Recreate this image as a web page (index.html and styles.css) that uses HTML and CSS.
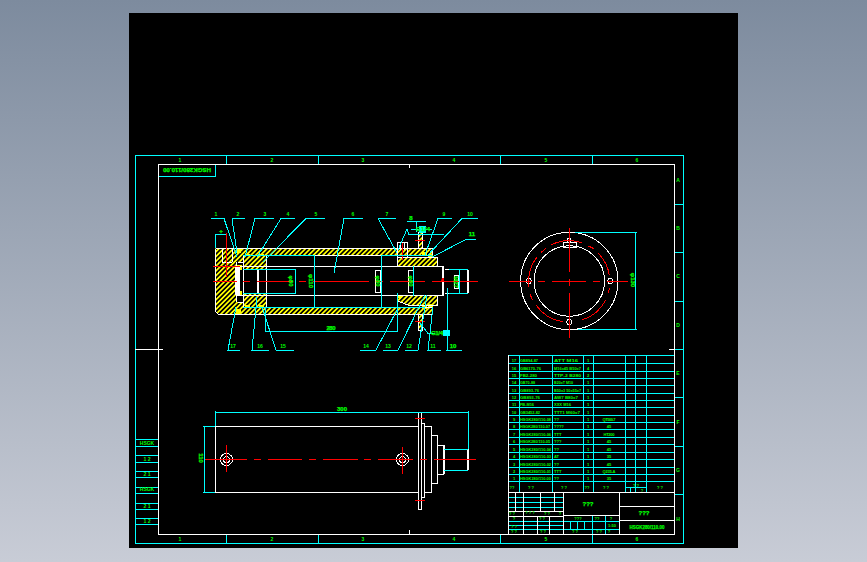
FILE: index.html
```html
<!DOCTYPE html>
<html lang="en">
<head>
  <meta charset="UTF-8">
  <title>HSGK280/110.00</title>
  <link rel="stylesheet" href="styles.css">
</head>
<body>
<main class="viewport">
<svg class="drawing" viewBox="129 13 609 535" width="609" height="535">
  <defs>
    <pattern id="hatch" width="3.4" height="3.4" patternUnits="userSpaceOnUse" patternTransform="rotate(45)">
      <rect width="1.7" height="3.4" fill="#ff0"/>
    </pattern>
  </defs>

  <!-- sheet frame -->
  <g class="cy">
    <rect x="135.5" y="155.5" width="548" height="388"/>
    <rect x="158.5" y="164.5" width="57" height="12"/>
    <path d="M226.5 155V164M318.5 155V164M500.5 155V164M592.5 155V164M674 204.5H683M674 252.5H683M674 301.5H683M674 349.5H683M674 397.5H683M674 446.5H683M674 494.5H683M226.5 534V543M318.5 534V543M500.5 534V543M592.5 534V543"/>
    <path d="M135 439.5H158M135 446.5H158M135 455.5H158M135 462.5H158M135 471.5H158M135 477.5H158M135 487.5H158M135 493.5H158M135 503.5H158M135 509.5H158M135 518.5H158M135 524.5H158"/>
  </g>
  <g class="wh">
    <rect x="158.5" y="164.5" width="516" height="370"/>
    <path d="M135 349.5H163M669 349.5H674M409.5 164V168M409.5 530V534"/>
  </g>
  <g class="t m">
    <text x="180" y="162">1</text><text x="272" y="162">2</text><text x="363" y="162">3</text><text x="454" y="162">4</text><text x="546" y="162">5</text><text x="637" y="162">6</text>
    <text x="180" y="541">1</text><text x="272" y="541">2</text><text x="363" y="541">3</text><text x="454" y="541">4</text><text x="546" y="541">5</text><text x="637" y="541">6</text>
    <text x="678" y="182">A</text><text x="678" y="230">B</text><text x="678" y="278">C</text><text x="678" y="327">D</text><text x="678" y="375">E</text><text x="678" y="424">F</text><text x="678" y="472">G</text><text x="678" y="521">H</text>
    <text x="147" y="445">HSGK</text><text x="147" y="461">1 2</text><text x="147" y="476">2 1</text><text x="147" y="491">HSGK</text><text x="147" y="508">2 1</text><text x="147" y="523">1 2</text>
    <text class="big" transform="rotate(180 187 170.5)" x="187" y="173" textLength="48" lengthAdjust="spacingAndGlyphs">HSGK280/110.00</text>
  </g>

  <!-- section view: hatched parts -->
  <g class="hatch">
    <path d="M215 248H432V255H243V262H236V302H243V307H432V314H218L215 311Z"/>
    <path d="M243 255H266V269H243ZM243 293H266V307H243Z"/>
    <path d="M397 257H437V266H397ZM397 296H437V305H408L397 301Z"/>
    <rect x="418" y="232" width="4" height="16"/>
    <rect x="418" y="314" width="4" height="16"/>
  </g>
  <g class="yl">
    <rect x="236" y="248" width="5" height="5"/><rect x="237" y="265" width="5" height="5"/><rect x="237" y="291" width="5" height="5"/><rect x="236" y="309" width="5" height="5"/>
    <rect x="245" y="254" width="5" height="2"/><rect x="259" y="254" width="5" height="2"/><rect x="245" y="305" width="5" height="2"/><rect x="259" y="305" width="5" height="2"/>
    <rect x="422" y="252" width="5" height="4"/><rect x="428" y="254" width="5" height="3"/><rect x="428" y="304" width="5" height="3"/><rect x="422" y="306" width="5" height="3"/>
    <rect x="398" y="296" width="4" height="2"/>
  </g>
  <!-- section view: outlines -->
  <g class="wh">
    <path d="M215.5 248.5H432.5V255M215.5 248.5V311.5L218.5 314.5H432.5V307M243 255.5H432M243 307.5H432"/>
    <path d="M222.5 248V262H232M232.5 248V262M238 262.5H243V302H238M236 262V302"/>
    <path d="M237 266.5H443M237 295.5H443M266.5 255V307M243.5 255V262M243.5 302V307"/>
    <path d="M397.5 257V266M397.5 296V301L408 305H437.5V296M397.5 257.5H437.5V266"/>
    <path d="M397.5 242.5H407.5V257M397.5 242V257M400.5 242V250M404.5 242V250"/>
    <path d="M418.5 232V248M422.5 232V248M418.5 314V330H422.5V314"/>
    <rect x="375.5" y="270.5" width="5" height="22"/>
    <rect x="408.5" y="270.5" width="5" height="22"/>
    <rect x="454.5" y="275.5" width="4" height="13"/>
    <path d="M445 269.5H467.5V293H445M467.5 269V293"/>
  </g>
  <g class="wt">
    <path d="M443 266V296M258 269V293M468 269.5V293"/>
  </g>
  <path class="wb" d="M237.5 267V295"/>
  <g class="rd">
    <path d="M213 281.5H237M243 281.5H250M257 281.5H293M299 281.5H306M313 281.5H369M376 281.5H383M390 281.5H425M432 281.5H478"/>
    <path d="M226.5 233V277M213 266.5H240M402.5 243V260M415 240.5H425M415 321.5H425"/>
  </g>
  <path class="ptr" d="M441 281h3v-3h-2z"/>

  <!-- section view: dimensions and leaders -->
  <g class="cy">
    <path d="M243 255.5H314.5V307M381.5 255V307M243 307.5H425M381 255.5H432M413.5 266V296M243 269.5H295.5V293.5H243M215.5 248V234.5H226"/>
    <path d="M265.5 307V331.5H397.5V293"/>
    <path d="M211 218.5H224L237 257M232 218.5H245M232 218.5L237 253M255 218.5H274M255 218.5L245 257M281 218.5H295M281 218.5L257 257M306 218.5H325M306 218.5L263 262M344 218.5H363M344 218.5L334 273M378 218.5H396M378 218.5L397 253M438 218.5H452M438 218.5L425 255M462 218.5H478M462 218.5L427 256M466 239.5H476M466 239.5L432 257"/>
    <path d="M398 250L407 229L409 234.5H444M407 221.5H426M416.5 221V232M411 229.5H432"/>
    <path d="M227 350.5H240M228 350L236 307M251 350.5H269M252 350L257 297M276 350.5H294M276 350L262 307M360 350.5H376M376 350L397 310M383 350.5H398M398 350L425 295M405 350.5H418M418 350L427 295M427 350.5H441M428 350L433 307M446 350.5H462M447.5 288V350M420 323L428 333.5H435"/>
    <path d="M449 269.5H468M449 293.5H468M459.5 269V293"/>
    <rect class="fill" x="443" y="330" width="6" height="5"/>
    <rect class="fill" x="419" y="226" width="6" height="6"/>
  </g>
  <g class="t m">
    <text x="216" y="216">1</text><text x="238" y="216">2</text><text x="265" y="216">3</text><text x="288" y="216">4</text><text x="316" y="216">5</text><text x="353" y="216">6</text><text x="387" y="216">7</text><text x="411" y="220" class="big">8</text><text x="444" y="216">9</text><text x="470" y="216">10</text><text x="472" y="236" class="big">11</text>
    <text x="233" y="348">17</text><text x="260" y="348">16</text><text x="283" y="348">15</text><text x="366" y="348">14</text><text x="388" y="348">13</text><text x="409" y="348">12</text><text x="433" y="348">11</text><text x="453" y="348" class="big">10</text>
    <text x="221" y="233" class="big">+</text>
    <text x="423" y="231" class="big" textLength="14">G1/4</text>
    <text x="437" y="335" class="big" textLength="12">G1/4</text>
    <text x="331" y="329.5" class="big" textLength="9">280</text>
    <text transform="rotate(90 291 281)" x="291" y="283" class="big">φ80</text>
    <text transform="rotate(90 311 281)" x="311" y="283" class="big">φ110</text>
    <text transform="rotate(90 378 281)" x="378" y="283" class="big">φ80</text>
    <text transform="rotate(90 411 281)" x="411" y="283" class="big">φ80</text>
    <text transform="rotate(90 456 282)" x="456" y="284" class="big">M27</text>
  </g>

  <!-- end view -->
  <g class="wh">
    <circle cx="569.3" cy="281" r="48.7"/>
    <circle cx="569.3" cy="281" r="35.3"/>
    <rect x="563.5" y="242.5" width="13" height="5"/>
    <rect x="567.5" y="238.5" width="3" height="4"/>
    <circle cx="528.7" cy="281" r="2.5"/>
    <circle cx="610.3" cy="281" r="2.5"/>
    <circle cx="569.3" cy="322" r="2.5"/>
  </g>
  <g class="rd">
    <path d="M551 245A40 40 0 0 1 581.7 242.7M541 252.7A40 40 0 0 1 546 248.3M588.3 246A40 40 0 0 1 593.7 248.7M598.3 253.3A40 40 0 0 1 609.3 275M609.3 288.3A40 40 0 0 1 608.3 293.3M605.7 300A40 40 0 0 1 582 320M562.7 321.7A40 40 0 0 1 536 305M532.7 300A40 40 0 0 1 530 294M529 286.7A40 40 0 0 1 536.7 257.3"/>
    <path d="M509 281.5H532M538 281.5H545M552 281.5H586M593 281.5H600M607 281.5H628M569.5 228V272M569.5 279V286M569.5 293V338"/>
  </g>
  <g class="cy">
    <path d="M575 232.5H637M578 329.5H637M635.5 232V329"/>
  </g>
  <text class="t m big" transform="rotate(90 633 280)" x="633" y="282">φ130</text>

  <!-- bottom view -->
  <g class="wh">
    <rect x="215.5" y="426.5" width="203" height="66"/>
    <rect x="418.5" y="412.5" width="3" height="97"/>
    <path d="M422 423.5H424.5V497H422M424 426.5H431.5V492.5H424M431 435.5H437.5V483.5H431M437 445.5H443V474.5H437M443.5 445V474M444 449.5H468M444 470.5H468"/>
    <circle cx="226.5" cy="459.5" r="6"/>
    <circle cx="226.5" cy="459.5" r="3"/>
    <circle cx="402.5" cy="459.5" r="6"/>
    <circle cx="402.5" cy="459.5" r="3"/>
  </g>
  <path class="wt" d="M467.5 449V470M444 445V474"/>
  <g class="rd">
    <path d="M205 459.5H247M254 459.5H261M268 459.5H302M309 459.5H316M323 459.5H358M364 459.5H371M378 459.5H413M420 459.5H427M434 459.5H476"/>
    <path d="M226.5 445V472M402.5 447V474M415 418.5H425M415 500.5H425"/>
  </g>
  <g class="cy">
    <path d="M215.5 426V412.5H468.5V449M204.5 426.5V492.5M203 426.5H215M203 492.5H215M215 411V414M468 411V414"/>
    <path d="M444 449.5H468M444 470.5H468"/>
  </g>
  <text class="t m big" x="342" y="411">300</text>
  <text class="t m big" transform="rotate(90 201 458)" x="201" y="460">110</text>

  <!-- parts list -->
  <g class="cy">
    <path d="M508 355.5H674M508 363.5H674M508 371.5H674M508 378.5H674M508 385.5H674M508 393.5H674M508 400.5H674M508 407.5H674M508 415.5H674M508 422.5H674M508 429.5H674M508 437.5H674M508 444.5H674M508 452.5H674M508 459.5H674M508 467.5H674M508 474.5H674M508 481.5H674"/>
    <path d="M519.5 355V492M552.5 355V492M583.5 355V492M593.5 355V492M625.5 355V492M635.5 355V492M646.5 355V492M625 487.5H646M630.5 487V492"/>
    <path d="M508 497.5H563M508 502.5H563M508 507.5H563M508 521.5H563M508 525.5H563M508 529.5H563"/>
    <path d="M563 521.5H619M563 529.5H619M570.5 521V529M577.5 521V529M584.5 521V529M592.5 515V534M605.5 515V534"/>
  </g>
  <g class="wh">
    <path d="M508.5 355V534M508 492.5H674M563.5 492V534M619.5 492V534M619 506.5H674M619 520.5H674M563 515.5H619M508 511.5H563M508 516.5H563"/>
    <path d="M515.5 492V511M523.5 492V534M540.5 492V511M554.5 492V511M537.5 516V534M549.5 516V534"/>
  </g>
  <g class="t sm">
    <g class="m">
      <text x="514" y="361.5">17</text><text x="514" y="369.5">16</text><text x="514" y="376.5">15</text><text x="514" y="383.5">14</text><text x="514" y="391.5">13</text><text x="514" y="398.5">12</text><text x="514" y="405.5">11</text><text x="514" y="413.5">10</text><text x="514" y="420.5">9</text><text x="514" y="427.5">8</text><text x="514" y="435.5">7</text><text x="514" y="442.5">6</text><text x="514" y="450.5">5</text><text x="514" y="457.5">4</text><text x="514" y="465.5">3</text><text x="514" y="472.5">2</text><text x="514" y="479.5">1</text>
      <text x="588" y="361.5">1</text><text x="588" y="369.5">4</text><text x="588" y="376.5">2</text><text x="588" y="383.5">1</text><text x="588" y="391.5">1</text><text x="588" y="398.5">1</text><text x="588" y="405.5">1</text><text x="588" y="413.5">1</text><text x="588" y="420.5">1</text><text x="588" y="427.5">1</text><text x="588" y="435.5">1</text><text x="588" y="442.5">1</text><text x="588" y="450.5">1</text><text x="588" y="457.5">1</text><text x="588" y="465.5">1</text><text x="588" y="472.5">1</text><text x="588" y="479.5">1</text>
      <text x="609" y="420.5" textLength="13">QT500-7</text><text x="609" y="427.5">45</text><text x="609" y="435.5" textLength="11">HT200</text><text x="609" y="442.5">45</text><text x="609" y="450.5">45</text><text x="609" y="457.5">35</text><text x="609" y="465.5">45</text><text x="609" y="472.5" textLength="13">Q235-A</text><text x="609" y="479.5">35</text>
      <text x="512" y="489">??</text><text x="531" y="489">? ?</text><text x="564" y="489">? ?</text><text x="587" y="489">??</text><text x="606" y="489">? ?</text><text x="660" y="489">? ?</text><text x="636" y="486.5">? ?</text><text x="642" y="491.5">?</text>
      <text class="big" x="588" y="506">???</text><text class="big" x="644" y="515">???</text>
      <text x="512" y="515">? ?</text><text x="530" y="514">? ? ?</text><text x="547" y="515">? ?</text><text x="560" y="515">?</text>
      <text x="578" y="519.5">???</text><text x="597" y="519.5">??</text><text x="611" y="519.5">?</text><text x="612" y="527">1:50</text>
      <text x="514" y="520">?</text><text x="542" y="520">? ?</text><text x="514" y="528">? ?</text><text x="514" y="533">? ?</text><text x="543" y="533">? ?</text>
      <text x="575" y="533">? ?</text><text x="599" y="533">? ?</text><text x="609" y="533">?</text>
      <text class="big" x="647" y="529" textLength="35" lengthAdjust="spacingAndGlyphs">HSGK280/110.00</text>
    </g>
    <text x="520" y="361.5" textLength="18" lengthAdjust="spacingAndGlyphs">GB894-87</text>
    <text x="520" y="369.5" textLength="21" lengthAdjust="spacingAndGlyphs">GB6170-76</text>
    <text x="520" y="376.5" textLength="17" lengthAdjust="spacingAndGlyphs">FB2-280</text>
    <text x="520" y="383.5" textLength="15" lengthAdjust="spacingAndGlyphs">GB70-88</text>
    <text x="520" y="391.5" textLength="19" lengthAdjust="spacingAndGlyphs">GB893-76</text>
    <text x="520" y="398.5" textLength="20" lengthAdjust="spacingAndGlyphs">GB893-76</text>
    <text x="520" y="405.5" textLength="14" lengthAdjust="spacingAndGlyphs">FB-M16</text>
    <text x="520" y="413.5" textLength="20" lengthAdjust="spacingAndGlyphs">GB3452-82</text>
    <text x="520" y="420.5" textLength="31" lengthAdjust="spacingAndGlyphs">HSGK280/110-08</text>
    <text x="520" y="427.5" textLength="30" lengthAdjust="spacingAndGlyphs">HSGK280/110-07</text>
    <text x="520" y="435.5" textLength="31" lengthAdjust="spacingAndGlyphs">HSGK280/110-06</text>
    <text x="520" y="442.5" textLength="30" lengthAdjust="spacingAndGlyphs">HSGK280/110-05</text>
    <text x="520" y="450.5" textLength="31" lengthAdjust="spacingAndGlyphs">HSGK280/110-04</text>
    <text x="520" y="457.5" textLength="31" lengthAdjust="spacingAndGlyphs">HSGK280/110-03</text>
    <text x="520" y="465.5" textLength="31" lengthAdjust="spacingAndGlyphs">HSGK280/110-02</text>
    <text x="520" y="472.5" textLength="31" lengthAdjust="spacingAndGlyphs">HSGK280/110-01</text>
    <text x="520" y="479.5" textLength="31" lengthAdjust="spacingAndGlyphs">HSGK280/110.00</text>
    <text x="554" y="361.5" textLength="24" lengthAdjust="spacingAndGlyphs">ATT M16</text>
    <text x="554" y="369.5" textLength="27" lengthAdjust="spacingAndGlyphs">M16x45 B50x7</text>
    <text x="554" y="376.5" textLength="27" lengthAdjust="spacingAndGlyphs">TTP-2 B280</text>
    <text x="554" y="383.5" textLength="19" lengthAdjust="spacingAndGlyphs">B20xT M10</text>
    <text x="554" y="391.5" textLength="27" lengthAdjust="spacingAndGlyphs">B50x3 50x55x7</text>
    <text x="554" y="398.5" textLength="24" lengthAdjust="spacingAndGlyphs">AW7 B80x7</text>
    <text x="554" y="405.5" textLength="17" lengthAdjust="spacingAndGlyphs">XXX M16</text>
    <text x="554" y="413.5" textLength="26" lengthAdjust="spacingAndGlyphs">TTT1 M60x7</text>
    <text x="554" y="420.5">??</text><text x="554" y="427.5">????</text><text x="554" y="435.5">TTT</text><text x="554" y="442.5">???</text><text x="554" y="450.5">??</text><text x="554" y="457.5">AT</text><text x="554" y="465.5">??</text><text x="554" y="472.5">TTT</text><text x="554" y="479.5">??</text>
  </g>
</svg>
</main>
</body>
</html>
```

FILE: styles.css
```css
* {
  margin: 0;
  padding: 0;
  box-sizing: border-box;
}

body {
  width: 867px;
  height: 562px;
  overflow: hidden;
  display: flex;
  justify-content: center;
  background: linear-gradient(180deg, #7d8b9e 0%, #c8ccd6 100%);
  padding: 13px 0 14px;
}

.viewport {
  width: 609px;
  height: 535px;
  margin-left: -0.5px;
  background: #000;
}

.drawing {
  display: block;
}

.cy, .wh, .wt, .wb, .rd {
  fill: none;
  shape-rendering: crispEdges;
  stroke-width: 1;
}

.cy { stroke: #00ffff; }
.wh { stroke: #ffffff; }
.wt { stroke: #ffffff; stroke-width: 2; }
.wb { stroke: #ffffff; stroke-width: 5; }
.rd { stroke: #ff0000; }
.cy .fill { fill: #00ffff; }

.hatch {
  fill: url(#hatch);
}

.yl {
  fill: #ffff00;
}

.ptr {
  fill: #ff0000;
}

.t {
  fill: #00ff00;
  font-family: "Liberation Sans", sans-serif;
  font-size: 5px;
  font-weight: bold;
}

.sm {
  font-size: 4px;
}

.m, .m text {
  text-anchor: middle;
}

.big {
  font-size: 6px;
  stroke: #00ff00;
  stroke-width: 0.25;
}
```
